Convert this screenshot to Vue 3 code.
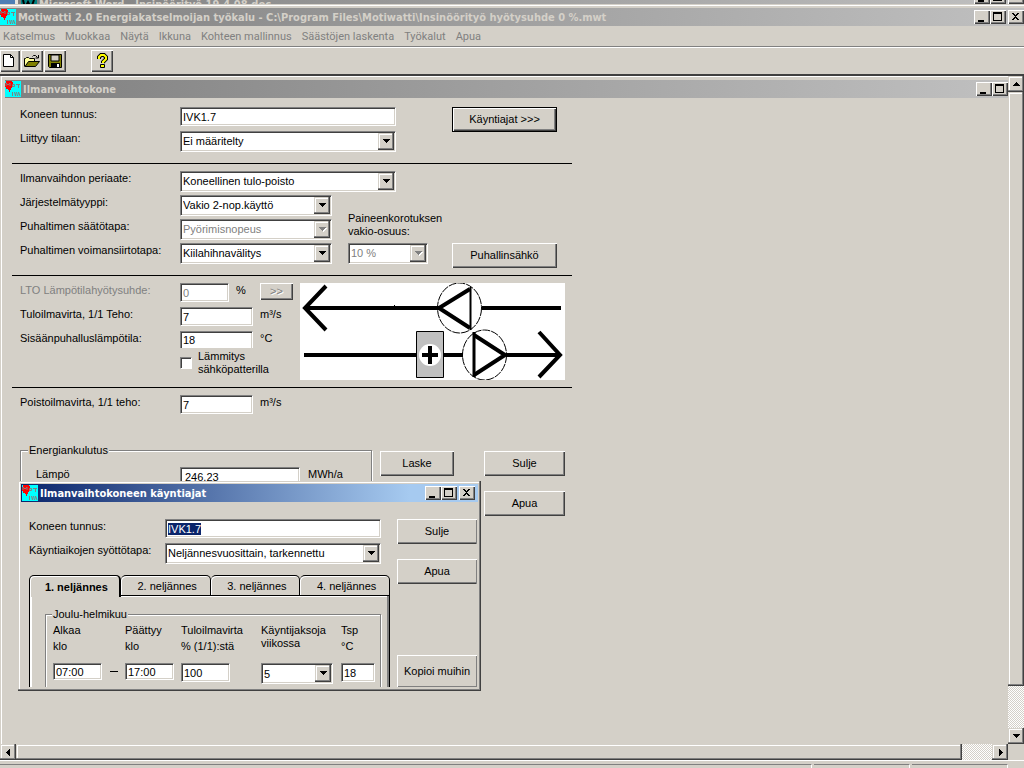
<script setup>
import { h, onMounted, ref } from 'vue'

const menus = ['Katselmus', 'Muokkaa', 'Näytä', 'Ikkuna', 'Kohteen mallinnus', 'Säästöjen laskenta', 'Työkalut', 'Apua']
const tabs = ['1. neljännes', '2. neljännes', '3. neljännes', '4. neljännes']
const runId = ref(null)

const AppIcon = () =>
  h('svg', { width: 16, height: 16, viewBox: '0 0 16 16', 'aria-hidden': 'true' }, [
    h('rect', { width: 16, height: 16, fill: '#00ffff' }),
    h('path', { d: 'M1 0h6v1h1v5H7v1H6v2H5v2H4V9H3V8H1V6H0V2h1z', fill: '#ff0000' }),
    h('path', { d: 'M1 5V2l2 2 2-2v3M7.500 3.500h2v2h-2zM11 3.500h4M13.500 3v4M7.500 11v4M9.500 11l1 4 1-4M12.500 15l1-4 1.500 4', fill: 'none', stroke: '#808080' }),
  ])

const glyphs = {
  min: 'M3 9h6v2H3z',
  max: 'M2 1h9v9H2zM3 3v6h7V3z',
  close: 'M3 2h2v1h1v1h1V3h1V2h2v1H9v1H8v1H7v1h1v1h1v1h1v1H8V8H7V7H6v1H5v1H3V8h1V7h1V6h1V5H5V4H4V3H3z',
}
const names = { min: 'Pienennä', max: 'Suurenna', close: 'Sulje ikkuna' }
const CaptionButton = (p) =>
  h('button', { type: 'button', 'aria-label': names[p.kind], class: ['cap', p.kind] }, [
    h('svg', { width: 13, height: 12, viewBox: '0 0 13 12' }, [h('path', { d: glyphs[p.kind], 'fill-rule': 'evenodd' })]),
  ])
CaptionButton.props = ['kind']

const arrows = {
  up: 'M4 2h1v1h1v1h1v1h1v1H1V5h1V4h1V3h1z',
  down: 'M1 2h7v1H7v1H6v1H5v1H4V5H3V4H2V3H1z',
  left: 'M6 1v7H5V7H4V6H3V5H2V4h1V3h1V2h1V1z',
  right: 'M3 1v7h1V7h1V6h1V5h1V4H6V3H5V2H4V1z',
}
const Arrow = (p) => h('svg', { width: 9, height: 9, viewBox: '0 0 9 9', 'aria-hidden': 'true' }, [h('path', { d: arrows[p.dir], fill: 'currentColor' })])
Arrow.props = ['dir']

const Drop = (p) =>
  h('span', { class: ['drop', { off: p.off }] }, [
    h('select', { id: p.field, disabled: p.off }, [h('option', p.value)]),
    h('span', { class: 'knob' }, [h(Arrow, { dir: 'down' })]),
  ])
Drop.props = { field: String, value: String, off: Boolean }

onMounted(() => {
  runId.value.focus({ preventScroll: true })
  runId.value.select()
})
</script>

<template>
  <div class="screen">
    <div class="behind">
      <span class="desk"></span>
      <div class="behind-bar">
        <svg width="16" height="16" viewBox="0 0 16 16" aria-hidden="true"><path d="M0 0h16v16H0z" fill="#008080" /><path d="M2 0l2 8 3-6 3 6 3-8" fill="none" stroke="#000" stroke-width="2" /></svg>
        <span>Microsoft Word - Insinöörityö 19.4.08.doc</span>
        <div class="caps"><CaptionButton kind="min" /><CaptionButton kind="max" /><CaptionButton kind="close" /></div>
      </div>
    </div>

    <header class="frame-top">
      <div class="title">
        <AppIcon />
        <h1>Motiwatti 2.0 Energiakatselmoijan työkalu - C:\Program Files\Motiwatti\Insinöörityö hyötysuhde 0 %.mwt</h1>
        <div class="caps"><CaptionButton kind="min" /><CaptionButton kind="max" /><CaptionButton kind="close" /></div>
      </div>
      <nav class="menu"><button v-for="m in menus" :key="m" type="button">{{ m }}</button></nav>
      <div class="tools">
        <button type="button" aria-label="Uusi">
          <svg width="16" height="16" viewBox="0 0 16 16"><path d="M1.500 1.500h7l3 3v9h-10z" fill="#fff" stroke="#000" /><path d="M8.500 1.500v3h3" fill="none" stroke="#000" /></svg>
        </button>
        <button type="button" aria-label="Avaa">
          <svg width="16" height="16" viewBox="0 0 16 16"><path d="M.5 13.500v-8h1l1-1h2l1 1h5v3" fill="#ffff99" stroke="#000" /><path d="M1 13.500l3.500-5h11l-4 5z" fill="#808000" stroke="#000" /><path d="M8.500 3.500l1-1h2l2 2M14.500 2v3h-3" fill="none" stroke="#000" /></svg>
        </button>
        <button type="button" aria-label="Tallenna">
          <svg width="16" height="16" viewBox="0 0 16 16"><path d="M1.500 1.500h13v13h-12l-1-1z" fill="#808000" stroke="#000" /><path d="M4 2h8v6H4z" fill="#d4d0c8" stroke="#000" /><path d="M4 10h9v5H4z" /><path d="M10 11h2v3h-2z" fill="#fff" /></svg>
        </button>
        <button type="button" class="help" aria-label="Ohje">
          <svg width="16" height="16" viewBox="0 0 16 16"><path d="M5 6V4l2-2h3l2 2v2l-3 3v1" fill="none" stroke="#000" stroke-width="4" /><path d="M6.500 11.500h4v3h-4z" fill="#ffff00" stroke="#000" /><path d="M5 6V4l2-2h3l2 2v2l-3 3v1" fill="none" stroke="#ffff00" stroke-width="2" /></svg>
        </button>
      </div>
    </header>

    <div class="workspace">
      <main class="child">
        <div class="title">
          <AppIcon />
          <h2>Ilmanvaihtokone</h2>
          <div class="caps"><CaptionButton kind="min" /><CaptionButton kind="max" /></div>
        </div>

        <form class="form" @submit.prevent>
          <section class="grid">
            <label for="id">Koneen tunnus:</label>
            <input id="id" class="box wide" value="IVK1.7" />
            <button type="button" class="btn default">Käyntiajat &gt;&gt;&gt;</button>
            <label for="room">Liittyy tilaan:</label>
            <Drop class="wide" field="room" value="Ei määritelty" />
          </section>

          <section class="grid">
            <label for="principle">Ilmanvaihdon periaate:</label>
            <Drop class="wide" field="principle" value="Koneellinen tulo-poisto" />
            <label for="system">Järjestelmätyyppi:</label>
            <Drop field="system" value="Vakio 2-nop.käyttö" />
            <label for="control">Puhaltimen säätötapa:</label>
            <Drop field="control" value="Pyörimisnopeus" off />
            <label for="share" class="two">Paineenkorotuksen<br />vakio-osuus:</label>
            <label for="drive">Puhaltimen voimansiirtotapa:</label>
            <Drop field="drive" value="Kiilahihnavälitys" />
            <Drop class="small" field="share" value="10 %" off />
            <button type="button" class="btn">Puhallinsähkö</button>
          </section>

          <section class="split">
            <div class="flows">
              <label for="lto" class="dim">LTO Lämpötilahyötysuhde:</label>
              <input id="lto" class="box" value="0" disabled />
              <span>%</span>
              <button type="button" class="btn mini" disabled>&gt;&gt;</button>
              <label for="supply">Tuloilmavirta, 1/1 Teho:</label>
              <input id="supply" class="box mid" value="7" />
              <span>m³/s</span>
              <label for="temp">Sisäänpuhalluslämpötila:</label>
              <input id="temp" class="box mid cut" value="18" />
              <span>°C</span>
              <div class="check"><input id="elec" type="checkbox" /><label for="elec">Lämmitys<br />sähköpatterilla</label></div>
            </div>
            <svg class="diagram" width="265" height="97" viewBox="0 0 265 97" role="img" aria-label="Ilmanvaihtokaavio">
              <path d="M0 0h265v97H0z" fill="#fff" />
              <g fill="none" stroke="#000" stroke-width="4">
                <path d="M4 25h135M182 25h79M4 72h113M143 72h20M206 72h55" />
                <path d="M26 3L5 25l21 22M239 49l21 23-21 22" />
                <path d="M170 6l-31 19 31 20M174 52l31 20-31 20" />
              </g>
              <path d="M170.500 4v43" stroke="#000" stroke-width="2" />
              <path d="M174 49v45" stroke="#000" stroke-width="3" />
              <path d="M94 22h1v1h-1z" />
              <g fill="none" stroke="#000" stroke-dasharray="8 1"><ellipse cx="159.500" cy="25" rx="22" ry="25" /><ellipse cx="184.500" cy="72" rx="22" ry="25" /></g>
              <path d="M116.500 48.500h27v46h-27z" fill="#c0c0c0" stroke="#000" />
              <circle cx="130" cy="72" r="11" fill="#fff" />
              <path d="M122 72h16M130 63v18" stroke="#000" stroke-width="4" />
            </svg>
          </section>

          <section class="exhaust">
            <label for="exh">Poistoilmavirta, 1/1 teho:</label>
            <input id="exh" class="box" value="7" />
            <span>m³/s</span>
          </section>

          <div class="bottom">
            <fieldset class="energy">
              <legend>Energiankulutus</legend>
              <label for="heat">Lämpö</label>
              <input id="heat" class="box" value="246,23" />
              <span>MWh/a</span>
            </fieldset>
            <button type="button" class="btn">Laske</button>
            <div class="stack"><button type="button" class="btn">Sulje</button><button type="button" class="btn">Apua</button></div>
          </div>
        </form>
      </main>

      <div class="vbar">
        <button type="button" aria-label="Ylös"><Arrow dir="up" /></button>
        <div class="thumb"></div>
        <div class="track"></div>
        <button type="button" aria-label="Alas"><Arrow dir="down" /></button>
      </div>

      <div class="hbar">
        <button type="button" aria-label="Vasemmalle"><Arrow dir="left" /></button>
        <div class="thumb"></div>
        <div class="track"></div>
        <button type="button" aria-label="Oikealle"><Arrow dir="right" /></button>
      </div>
    </div>

    <footer class="status"><span></span><span></span><span></span></footer>

    <div class="dialog" role="dialog" aria-label="Ilmanvaihtokoneen käyntiajat">
      <div class="title active">
        <AppIcon />
        <h2>Ilmanvaihtokoneen käyntiajat</h2>
        <div class="caps"><CaptionButton kind="min" /><CaptionButton kind="max" /><CaptionButton kind="close" /></div>
      </div>
      <div class="dialog-body">
        <div class="dialog-main">
          <div class="pair">
            <label for="run-id">Koneen tunnus:</label>
            <input id="run-id" ref="runId" class="box" value="IVK1.7" />
            <label for="mode">Käyntiaikojen syöttötapa:</label>
            <Drop field="mode" value="Neljännesvuosittain, tarkennettu" />
          </div>
          <div class="tabs" role="tablist">
            <button v-for="(t, i) in tabs" :key="t" type="button" role="tab" :aria-selected="i === 0" :class="{ on: i === 0 }">{{ t }}</button>
          </div>
          <div class="panel">
            <fieldset class="quarter">
              <legend>Joulu-helmikuu</legend>
              <label for="from">Alkaa<br />klo</label>
              <span></span>
              <label for="to">Päättyy<br />klo</label>
              <label for="pct">Tuloilmavirta<br />% (1/1):stä</label>
              <label for="count" class="tight">Käyntijaksoja<br />viikossa</label>
              <label for="tsp">Tsp<br />°C</label>
              <input id="from" class="box low" value="07:00" />
              <span class="dash"></span>
              <input id="to" class="box low" value="17:00" />
              <input id="pct" class="box" value="100" />
              <Drop field="count" value="5" />
              <input id="tsp" class="box" value="18" />
            </fieldset>
          </div>
        </div>
        <div class="dialog-side">
          <button type="button" class="btn">Sulje</button>
          <button type="button" class="btn">Apua</button>
          <button type="button" class="btn copy">Kopioi muihin</button>
        </div>
      </div>
    </div>
  </div>
</template>

<style>
body { background: #d4d0c8; overflow: hidden; }
</style>

<style scoped>
.screen, .screen :deep(*) { box-sizing: border-box; }
.screen {
  position: relative; display: flex; flex-direction: column; height: 100vh; overflow: hidden;
  background: #d4d0c8; color: #000; font: 11px/13px "Liberation Sans", Arial, sans-serif;
}
.screen :deep(button), .screen :deep(input), .screen :deep(select) { font: inherit; color: inherit; margin: 0; border-radius: 0; outline: none; }
.screen :deep(button) { padding: 0; border: 0; background: #d4d0c8; }
.screen :deep(svg) { display: block; flex: none; }
h1, h2 { margin: 0; padding-top: 1px; font: inherit; }

.behind { display: flex; height: 4px; overflow: hidden; flex: none; }
.desk { width: 18px; background: #4f7fb5; border-right: 3px solid #e8e6e0; }
.behind-bar {
  display: flex; flex: 1; align-items: flex-start; gap: 2px; padding: 0 0 0 3px; color: #d4d0c8;
  background: linear-gradient(90deg, #808080, #c0c0c0); font: bold 11px/9px "DejaVu Sans Condensed", "DejaVu Sans", sans-serif;
}
.behind-bar .caps { margin-top: -10px; }
.frame-top { flex: none; border-top: 1px solid #d4d0c8; box-shadow: inset 0 1px #fff; padding-top: 3px; }
.title {
  display: flex; align-items: center; height: 18px; gap: 2px; flex: none; color: #d4d0c8;
  background: linear-gradient(90deg, #808080, #c0c0c0); font: bold 11px/17px "DejaVu Sans Condensed", "DejaVu Sans", sans-serif; white-space: nowrap;
}
.title.active { background: linear-gradient(90deg, #0a246a, #a6caf0 85%); color: #fff; padding: 0 3px 0 1px; }
.caps { display: flex; margin-left: auto; }
.screen :deep(.cap) {
  width: 16px; height: 14px; padding: 0 0 0 1px; color: #000;
  box-shadow: inset 1px 1px #fff, inset -1px -1px #404040, inset -2px -2px #808080;
}
.screen :deep(.cap.close) { margin-left: 2px; }
.menu { display: flex; height: 20px; gap: 10px; padding: 1px 0 0 3px; font: 11px/19px Roboto, "DejaVu Sans Condensed", sans-serif; color: #808080; }
.tools { display: flex; gap: 1px; height: 30px; padding-top: 3px; border-top: 1px solid #808080; border-bottom: 2px solid #404040; box-shadow: inset 0 1px #fff; }
.tools button {
  display: flex; align-items: center; justify-content: center; width: 22px; height: 22px;
  box-shadow: inset 1px 1px #fff, inset -1px -1px #404040, inset -2px -2px #808080;
}
.tools button:first-child { width: 20px; }
.tools .help { margin-left: 24px; }

.workspace { display: grid; grid-template-columns: 1fr 16px; grid-template-rows: 1fr 16px; flex: 1; min-height: 0; }
.child { min-height: 0; overflow: hidden; border-left: 1px solid #d4d0c8; box-shadow: inset 1px 1px #fff; padding: 4px 0 0 4px; }
.form { width: 560px; margin-left: 7px; padding-top: 2px; }
.grid { display: grid; grid-template-columns: 160px 168px 104px 105px; grid-auto-rows: 24px; align-items: start; padding: 7px 0 8px 8px; border-bottom: 1px solid #000; }
.form label, .dialog label { white-space: nowrap; }
.grid > label { padding-top: 1px; grid-column: 1; }
.grid > .drop, .grid > .box { grid-column: 2; width: 152px; }
.grid > .wide { width: 216px; grid-column: 2 / 4; }
.grid > .small { grid-column: 3; width: 80px; }
.grid > .two { grid-column: 3; margin-top: -8px; padding: 1px 0 0; }
.grid > .btn { grid-column: 4; height: 25px; }

.box {
  height: 19px; width: 100%; min-width: 0; padding: 1px 2px; background: #fff; border: 1px solid; border-color: #808080 #fff #fff #808080;
  box-shadow: inset 1px 1px #404040, inset -1px -1px #d4d0c8;
}
.screen .box:disabled, .dim { color: #808080; }
.screen :deep(.drop) {
  display: flex; position: relative; height: 21px; background: #fff; border: 1px solid; border-color: #808080 #fff #fff #808080;
  box-shadow: inset 1px 1px #404040, inset -1px -1px #d4d0c8;
}
.screen :deep(select) { appearance: none; flex: 1; min-width: 0; border: 0; background: transparent; padding: 1px 2px; opacity: 1; }
.screen :deep(.drop.off) { color: #808080; }
.screen :deep(.knob) {
  position: absolute; top: 1px; right: 1px; bottom: 1px; width: 16px; display: flex; align-items: center; justify-content: center; pointer-events: none;
  background: #d4d0c8; box-shadow: inset -1px -1px #404040, inset -2px -2px #808080, inset 1px 1px #d4d0c8, inset 2px 2px #fff;
}
.screen :deep(.drop.off .knob svg) { filter: drop-shadow(1px 1px 0 #fff); }
.screen .btn { height: 25px; text-align: center; white-space: nowrap; box-shadow: inset 1px 1px #fff, inset -1px -1px #404040, inset -2px -2px #808080; }
.screen .btn.default { box-shadow: inset 0 0 0 1px #000, inset 2px 2px #fff, inset -2px -2px #404040, inset -3px -3px #808080; }

.split { display: flex; padding: 7px 0 7px 8px; border-bottom: 1px solid #000; }
.flows { display: grid; grid-template-columns: 160px 56px 24px 40px; grid-template-rows: 24px 24px 19px 30px; align-items: start; }
.flows > label, .flows > span { padding-top: 1px; }
.flows > .box { width: 49px; }
.flows > .mid { width: 73px; grid-column: 2 / 4; }
.flows > .cut { height: 17px; border-bottom: 0; box-shadow: inset 1px 1px #404040, inset -1px 0 #d4d0c8; }
.screen .mini { width: 33px; height: 17px; color: #808080; text-shadow: 1px 1px #fff; }
.check { grid-column: 2 / 5; display: flex; gap: 6px; align-items: center; }
.check input {
  appearance: none; width: 12px; height: 12px; background: #fff; border: 1px solid; border-color: #808080 #fff #fff #808080; box-shadow: inset 1px 1px #404040;
}
.exhaust { display: grid; grid-template-columns: 160px 73px 40px; padding: 7px 0 0 8px; height: 56px; align-items: start; }
.exhaust > span { padding: 1px 0 0 7px; }
.exhaust > label { padding-top: 1px; }
.bottom { display: flex; gap: 8px; padding-left: 8px; align-items: flex-start; }
.bottom > .btn { width: 74px; margin-top: 7px; }
.stack { display: grid; gap: 15px; width: 81px; margin: 7px 0 0 22px; }
fieldset { margin: 0; min-width: 0; border: 1px solid #808080; box-shadow: 1px 1px #fff, inset 1px 1px #fff; }
legend { background: #d4d0c8; padding: 0 1px; }
.energy { width: 352px; height: 120px; padding: 10px 0 0 15px; display: grid; grid-template-columns: 144px 120px 60px; align-items: start; }
.energy legend { margin-left: -8px; }
.energy > label, .energy > span { padding-top: 1px; }
.energy > span { padding-left: 8px; }
.energy .box { padding-left: 4px; }

.vbar, .hbar { display: flex; }
.vbar { flex-direction: column; }
.vbar button, .hbar button { display: flex; align-items: center; justify-content: center; flex: none; width: 16px; height: 16px; }
.vbar button, .hbar button, .thumb { box-shadow: inset -1px -1px #404040, inset -2px -2px #808080, inset 1px 1px #d4d0c8, inset 2px 2px #fff; }
.vbar .thumb { flex: 594; }
.vbar .track { flex: 42; }
.hbar .thumb { flex: 946; }
.hbar .track { flex: 30; }
.track { background: repeating-conic-gradient(#fff 0 25%, #d4d0c8 0 50%) 0 0 / 2px 2px; }
.status { display: flex; gap: 2px; flex: none; height: 8px; padding: 3px 16px 0 0; border-top: 1px solid #fff; box-shadow: inset 0 1px #d4d0c8; }
.status span { width: 96px; border-top: 1px solid #808080; border-right: 1px solid #fff; }
.status span:first-child { flex: 1; }

.dialog {
  position: absolute; left: 18px; top: 481px; width: 463px; height: 210px; overflow: hidden; background: #d4d0c8; padding: 3px;
  box-shadow: inset -1px -1px #404040, inset -2px -2px #808080, inset 1px 1px #d4d0c8, inset 2px 2px #fff;
}
.dialog-body { display: flex; height: 185px; overflow: hidden; padding: 17px 1px 0 8px; justify-content: space-between; }
.dialog-main { width: 361px; }
.pair { display: grid; grid-template-columns: 136px 216px; grid-auto-rows: 24px; align-items: start; margin-bottom: 8px; }
.pair label { padding-top: 1px; }
.pair .box::selection { background: #0a246a; color: #fff; }
.dialog-side { display: flex; flex-direction: column; gap: 15px; width: 80px; }
.screen .dialog-side .btn { box-shadow: inset 1px 1px #fff, inset -1px 0 #808080, inset 0 -1px #404040, inset 0 -2px #808080; }
.screen .dialog-side .copy { height: 32px; margin-top: auto; box-shadow: inset 1px 1px #fff, inset -1px -1px #808080; }
.tabs { display: flex; height: 21px; border-bottom: 1px solid #000; }
.screen .tabs button { flex: 1; height: 21px; border: 1px solid #000; border-left-width: 0; border-radius: 5px 5px 0 0; padding: 1px 0 0 4px; box-shadow: inset 1px 1px #fff; }
.screen .tabs .on { position: relative; height: 22px; border-width: 1px 2px 0 1px; font-weight: bold; box-shadow: inset 1px 1px #fff; }
.panel { height: 130px; padding: 12px 8px 0 15px; border: solid #000; border-width: 0 1px; box-shadow: inset 2px 0 #fff, inset -2px 0 #808080, inset 0 1px #fff; }
.quarter { height: 120px; padding: 1px 0 0 7px; display: grid; grid-template-columns: 49px 23px 56px 80px 80px 34px; grid-template-rows: 41px 21px; align-items: start; line-height: 16px; }
.quarter legend { line-height: 13px; margin-left: -1px; }
.quarter .tight { line-height: 13px; padding-top: 2px; }
.quarter .box { width: 49px; }
.quarter #tsp { width: 34px; }
.quarter .low { height: 17px; padding: 0 2px; }
.quarter :deep(.drop) { width: 72px; }
.dash { justify-self: center; width: 8px; height: 9px; border-bottom: 1px solid #000; }
</style>
